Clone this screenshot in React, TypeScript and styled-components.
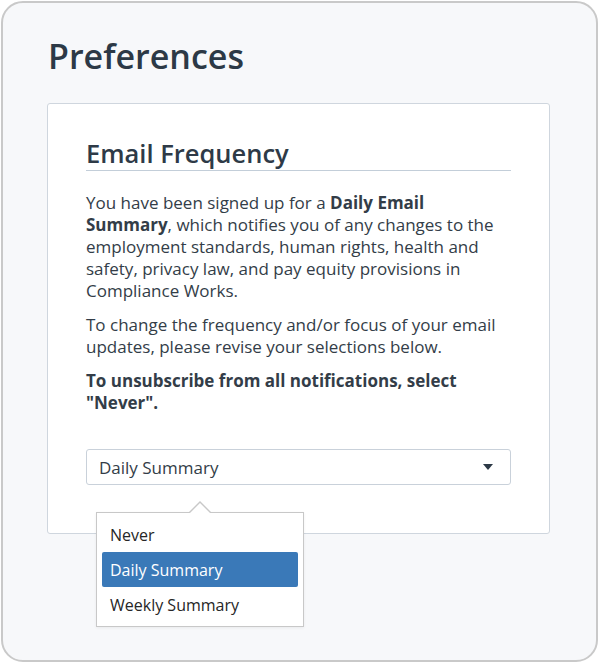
import React from 'react'
import styled, { createGlobalStyle } from 'styled-components'

const GlobalStyle = createGlobalStyle`
  html, body {
    margin: 0;
    padding: 0;
    background: #ffffff;
  }
  body {
    font-family: 'Open Sans', 'Liberation Sans', sans-serif;
    color: #323c47;
  }
`

const Frame = styled.div`
  box-sizing: border-box;
  margin: 1px 0 0 1px;
  width: 597px;
  height: 661px;
  border: 2px solid #c9c9c9;
  border-radius: 22px;
  background: #f7f8fa;
  padding: 32px 0 0 44px;
  display: flex;
  flex-direction: column;
  align-items: flex-start;
`

const PageTitle = styled.h1`
  margin: 0 0 26px 1px;
  font-size: 34px;
  line-height: 42px;
  font-weight: 600;
  color: #2c3946;
`

const Card = styled.section`
  box-sizing: border-box;
  width: 503px;
  background: #ffffff;
  border: 1px solid #cfd6de;
  border-radius: 3px;
  padding: 34px 38px 48px 38px;
  display: flex;
  flex-direction: column;
`

const SectionTitle = styled.h2`
  margin: 0 0 21px 0;
  padding-bottom: 2px;
  font-size: 25.5px;
  line-height: 30px;
  font-weight: 600;
  color: #2e3a47;
  border-bottom: 1px solid #c3ced9;
`

const Paragraph = styled.p<{ $strong?: boolean }>`
  margin: 0 0 12px 0;
  max-width: 414px;
  font-size: 17px;
  line-height: 22px;
  font-weight: ${({ $strong }) => ($strong ? 700 : 400)};
  color: #333d48;

  b {
    font-weight: 700;
  }
`

const SelectWrap = styled.div`
  position: relative;
  margin-top: 23px;
`

const SelectBox = styled.div`
  box-sizing: border-box;
  height: 36px;
  border: 1px solid #c9d1da;
  border-radius: 3px;
  background: #ffffff;
  padding: 0 17px 0 12px;
  display: flex;
  align-items: center;
  justify-content: space-between;
  font-size: 17px;
  color: #333d48;
`

const Caret = styled.span`
  width: 0;
  height: 0;
  border-left: 5.5px solid transparent;
  border-right: 5.5px solid transparent;
  border-top: 6px solid #2c3946;
`

const Popover = styled.ul`
  position: absolute;
  top: 63px;
  left: 10px;
  box-sizing: border-box;
  width: 208px;
  margin: 0;
  padding: 4px 5px;
  list-style: none;
  background: #ffffff;
  border: 1px solid #c8c8c8;
  box-shadow: 0 1px 3px rgba(0, 0, 0, 0.06);

  &::before,
  &::after {
    content: '';
    position: absolute;
    left: 50%;
    width: 0;
    height: 0;
    transform: translateX(-50%);
    border-left: 12px solid transparent;
    border-right: 12px solid transparent;
  }
  &::before {
    top: -12px;
    border-bottom: 12px solid #c8c8c8;
  }
  &::after {
    top: -10px;
    border-left-width: 11px;
    border-right-width: 11px;
    border-bottom: 11px solid #ffffff;
  }
`

const Option = styled.li<{ $selected?: boolean }>`
  height: 35px;
  display: flex;
  align-items: center;
  padding-left: 8px;
  border-radius: 2px;
  font-size: 16px;
  color: ${({ $selected }) => ($selected ? '#ffffff' : '#262626')};
  background: ${({ $selected }) => ($selected ? '#3a79b8' : 'transparent')};
`

const OPTIONS = ['Never', 'Daily Summary', 'Weekly Summary']

export default function App() {
  const selected = 'Daily Summary'

  return (
    <>
      <GlobalStyle />
      <Frame>
        <PageTitle>Preferences</PageTitle>
        <Card>
          <SectionTitle>Email Frequency</SectionTitle>
          <Paragraph>
            You have been signed up for a <b>Daily Email Summary</b>, which notifies you of any
            changes to the employment standards, human rights, health and safety, privacy law, and
            pay equity provisions in Compliance Works.
          </Paragraph>
          <Paragraph>
            To change the frequency and/or focus of your email updates, please revise your
            selections below.
          </Paragraph>
          <Paragraph $strong>To unsubscribe from all notifications, select "Never".</Paragraph>
          <SelectWrap>
            <SelectBox>
              <span>{selected}</span>
              <Caret />
            </SelectBox>
            <Popover>
              {OPTIONS.map(opt => (
                <Option key={opt} $selected={opt === selected}>
                  {opt}
                </Option>
              ))}
            </Popover>
          </SelectWrap>
        </Card>
      </Frame>
    </>
  )
}
